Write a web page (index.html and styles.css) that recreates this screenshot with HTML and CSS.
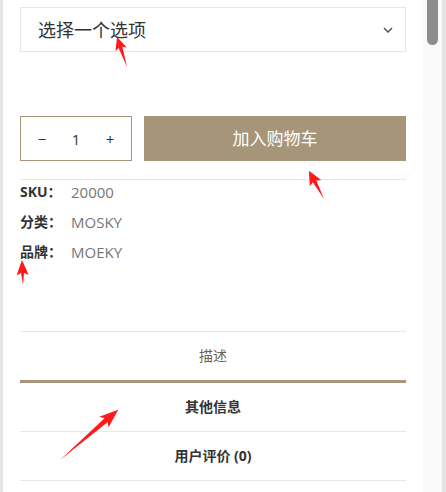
FILE: index.html
```html
<!DOCTYPE html>
<html lang="zh-CN">
<head>
	<meta charset="utf-8">
	<meta name="viewport" content="width=device-width, initial-scale=1.0">
	<title>商品详情</title>
	<link rel="stylesheet" href="styles.css">
</head>
<body>
	<div class="edge"></div>
	<div class="page">
		<div class="select">
			<span>选择一个选项</span>
			<svg class="chevron" width="10" height="6" viewBox="0 0 10 6"><path d="M1 1l4 4 4-4" fill="none" stroke="#4a5568" stroke-width="1.5"/></svg>
		</div>

		<div class="cart">
			<div class="qty">
				<span class="qty-btn">−</span>
				<span class="qty-num">1</span>
				<span class="qty-btn">+</span>
			</div>
			<div class="add">加入购物车</div>
		</div>

		<div class="meta">
			<div class="row"><b>SKU：</b><span>20000</span></div>
			<div class="row"><b>分类：</b><span>MOSKY</span></div>
			<div class="row"><b>品牌：</b><span>MOEKY</span></div>
		</div>

		<ul class="tabs">
			<li class="current">描述</li>
			<li>其他信息</li>
			<li>用户评价 (0)</li>
		</ul>
	</div>
	<div class="scrollbar"><div class="thumb"></div></div>
	<div class="edge edge-right"></div>

	<!-- 标注箭头 -->
	<svg class="marks" width="446" height="492" viewBox="0 0 446 492">
		<g fill="#ff1a1a">
			<polygon transform="translate(127,67) rotate(-108.4)" points="0,0 20.6,-2 18.6,-6 31.6,0 18.6,6 20.6,2"/>
			<polygon transform="translate(324,199) rotate(-118.2)" points="0,0 20,-2 18,-6.5 32,0 18,6.5 20,2"/>
			<polygon transform="translate(23,285) rotate(-92.3)" points="0,0 12,-1.5 10,-6 25,0 10,6 12,1.5"/>
			<polygon transform="translate(60,460) rotate(-40.8)" points="0,0 61,-2.5 58,-7 77,0 58,7 61,2.5"/>
		</g>
	</svg>
</body>
</html>
```

FILE: styles.css
```css
html, body, ul, li{
	margin: 0;
	padding: 0;
}
ul{
	list-style: none;
}
body{
	position: relative;
	display: flex;
	height: 492px;
	overflow: hidden;
	background: #fff;
	color: #333;
	font: 14px/20px "Open Sans", "Noto Sans CJK SC", sans-serif;
}
.edge{
	width: 3px;
	background: #e4e4e4;
}
.edge-right{
	width: 4px;
}
.page{
	flex: 1;
	padding: 7px 17px 0;
}
.scrollbar{
	width: 19px;
	background: #fafafa;
}
.scrollbar .thumb{
	width: 11px;
	height: 45px;
	margin-left: 4px;
	background: #8d8d8d;
	border-radius: 0 0 6px 6px;
}

/* 下拉选择 */
.select{
	height: 45px;
	box-sizing: border-box;
	border: 1px solid #e3e6ea;
	padding: 0 12px 0 17px;
	display: flex;
	align-items: center;
	justify-content: space-between;
	font-size: 18px;
	color: #333;
}

/* 数量 + 加入购物车 */
.cart{
	display: flex;
	gap: 12px;
	height: 45px;
	margin-top: 64px;
}
.qty{
	width: 112px;
	box-sizing: border-box;
	border: 1px solid #a69579;
	padding: 0 4px;
	display: flex;
	align-items: center;
}
.qty span{
	width: 34px;
	text-align: center;
}
.qty-btn{
	font-size: 15px;
}
.qty-num{
	font-size: 15px;
}
.add{
	flex: 1;
	background: #a69579;
	color: #fff;
	font-size: 17px;
	display: flex;
	align-items: center;
	justify-content: center;
}

/* 商品信息 */
.meta{
	margin-top: 18px;
	border-top: 1px solid #e6e6e6;
	display: flex;
	flex-direction: column;
	gap: 6px;
}
.meta .row{
	display: grid;
	grid-template-columns: 51px auto;
	line-height: 24px;
}
.meta b{
	color: #333;
}
.meta span{
	color: #777;
	font-size: 15px;
}

/* 选项卡 */
.tabs{
	margin-top: 67px;
	border-top: 1px solid #e8e8e8;
}
.tabs li{
	height: 48px;
	line-height: 48px;
	text-align: center;
	font-weight: bold;
	border-bottom: 1px solid #e8e8e8;
}
.tabs li.current{
	font-weight: normal;
	color: #6e6353;
	border-bottom: 3px solid #a69579;
}

.marks{
	position: absolute;
	left: 0;
	top: 0;
	pointer-events: none;
}
```
